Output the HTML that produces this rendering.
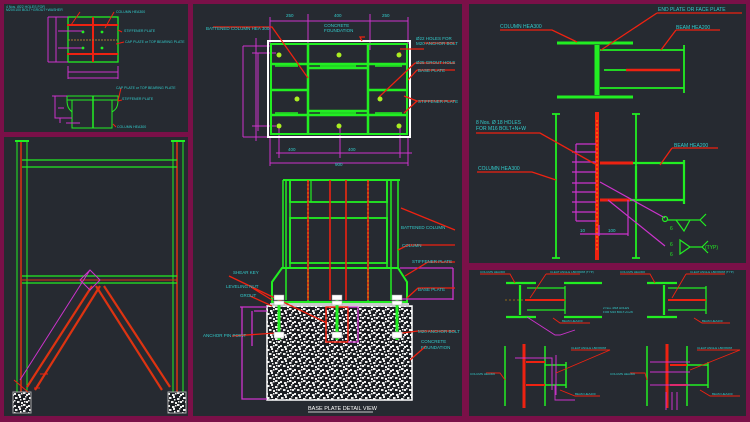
<!DOCTYPE html>
<html><head><meta charset="utf-8"><style>
html,body{margin:0;padding:0;background:#7a1048;}
svg{display:block;font-family:"Liberation Sans",sans-serif;}
</style></head><body>
<svg width="750" height="422" viewBox="0 0 750 422" xmlns="http://www.w3.org/2000/svg">
<defs>
<pattern id="conc" width="14" height="12" patternUnits="userSpaceOnUse">
<rect width="14" height="12" fill="#1c1f24"/>
<g fill="#eeeeee">
<rect x="1" y="1" width="2.5" height="2"/><rect x="5" y="0" width="2" height="2"/><rect x="9" y="2" width="2.5" height="2"/><rect x="12" y="5" width="2" height="2"/>
<rect x="3" y="5" width="2.5" height="2"/><rect x="7" y="6" width="2" height="2"/><rect x="0" y="9" width="2" height="2"/><rect x="4" y="10" width="2.5" height="2"/>
<rect x="9" y="8" width="2.5" height="2"/><rect x="12" y="10" width="2" height="2"/><rect x="6" y="3" width="1.5" height="1.5"/><rect x="11" y="0" width="1.5" height="1.5"/>
<rect x="0" y="4" width="1.5" height="1.5"/><rect x="7" y="9" width="1.5" height="1.5"/><rect x="10" y="5" width="1.5" height="1.5"/>
</g></pattern>
</defs>
<rect width="750" height="422" fill="#7a1048"/>
<g fill="#262a31">
<rect x="4" y="4" width="184" height="128"/>
<rect x="4" y="137" width="184" height="279"/>
<rect x="193" y="4" width="269" height="412"/>
<rect x="469" y="4" width="277" height="259"/>
<rect x="469" y="270" width="277" height="146"/>
</g>

<!-- ===== TOP LEFT ===== -->
<g stroke-width="1" fill="none">
<rect x="68" y="17" width="50" height="45" stroke="#22ee22" stroke-width="1.3"/>
<line x1="67" y1="25" x2="118" y2="25" stroke="#ee2211" stroke-width="2"/>
<line x1="67" y1="54" x2="118" y2="54" stroke="#ee2211" stroke-width="2"/>
<line x1="93" y1="17" x2="93" y2="62" stroke="#ee2211" stroke-width="2"/>
<line x1="68" y1="40" x2="118" y2="40" stroke="#aa7733" stroke-dasharray="2 1"/>
<path d="M48 17 H68 M48 62 H68 M48 17 V62 M56 17 V62 M68 66 V79 M118 66 V79 M68 72 H118 M68 78 H118 M58 31 H84 M58 48 H84" stroke="#cc33cc"/>
<path d="M67 96 H118 V100 H67 Z" stroke="#22ee22"/>
<path d="M72 100 V128 H112 V100 M67 100 C67 108 70 110 72 112 M118 100 C118 108 115 110 112 112" stroke="#22ee22"/>
<line x1="93" y1="96" x2="93" y2="128" stroke="#22ee22" stroke-width="1.5"/>
<path d="M52 96 H67 M55 96 V118 H72 M58 108 H64 M60 118 V123 M66 123 H80" stroke="#cc33cc"/>
<path d="M71 25 L80 12 M105 28 L114 12 M118 30 L122 32 M116 44 L124 42 M118 101 L121 88 M118 101 L122 100 M113 124 L116 127" stroke="#ee2211"/>
</g>
<g fill="#22ee22"><circle cx="83" cy="32" r="1.4"/><circle cx="102" cy="32" r="1.4"/><circle cx="83" cy="48" r="1.4"/><circle cx="102" cy="48" r="1.4"/></g>
<g fill="#33cccc" font-size="3.5">
<text x="6" y="8">4 Nos. Ø22 HOLES FOR</text><text x="6" y="11">M20X100 BOLT+GROUT+WASHER</text>
<text x="116" y="13">COLUMN HEA300</text>
<text x="124" y="32">STIFFENER PLATE</text>
<text x="125" y="43">CAP PLATE or TOP BEARING PLATE</text>
<text x="116" y="89">CAP PLATE or TOP BEARING PLATE</text>
<text x="122" y="100">STIFFENER PLATE</text>
<text x="117" y="128">COLUMN HEA300</text>
</g>

<!-- ===== LEFT MID FRAME ===== -->
<g fill="none" stroke-width="1">
<path d="M17 141 V393 M27 141 V393 M173 141 V393 M183 141 V393" stroke="#22ee22"/>
<path d="M21 141 V393 M177 141 V393" stroke="#dd3311" stroke-width="1.5"/>
<path d="M15 141 H29 M171 141 H185" stroke="#22ee22" stroke-width="2"/>
<path d="M22 160 H177 M22 167 H177 M22 276 H177 M22 283 H177" stroke="#22ee22" stroke-width="1.3"/>
<line x1="22" y1="280" x2="177" y2="280" stroke="#dd3311"/>
<path d="M92 286 L27 387 M100 286 L35 390 M104 286 L170 387 M96 286 L162 390" stroke="#dd3311" stroke-width="2.2"/>
<path d="M90 270 L100 280 L90 290 L80 280 Z M90 270 L20 380" stroke="#cc33cc"/>
<rect x="13" y="392" width="18" height="21" fill="url(#conc)" stroke="#aaa"/>
<rect x="168" y="392" width="18" height="21" fill="url(#conc)" stroke="#aaa"/>
<path d="M14 380 L28 392 M40 374 L48 374 M34 388 L40 388" stroke="#ee2211"/>
</g>

<!-- ===== CENTER PLAN ===== -->
<g fill="none">
<path d="M270 17 V44 M308 14 V50 M370 14 V50 M408 17 V44 M270 21 H408" stroke="#cc33cc"/>
<path d="M243 46 V137 M258 53 V131 M243 46 H270 M243 137 H270 M252 53 H276 M252 126 H276 M256 38 V141 M276 153 H412 M270 163 H408 M270 136 V166 M408 136 V166 M279 128 V158 M340 128 V158 M400 128 V158" stroke="#cc33cc"/>
<rect x="268" y="41" width="142" height="96" stroke="#ffffff" stroke-width="2"/>
<rect x="271" y="44" width="136" height="90" stroke="#22ee22" stroke-width="2"/>
<path d="M271 64 H407 M271 115 H407 M308 44 V134 M368 44 V134 M271 90 H308 M368 90 H407 M308 68 H368 M308 111 H368" stroke="#22ee22" stroke-width="2.5"/>
<path d="M275 66 H298 M320 66 H356 M375 66 H402 M275 113 H298 M320 113 H356 M375 113 H402" stroke="#22ee22" stroke-width="1.5"/>
<path d="M213 27 H272 L308 78 M365 37 H360 L362 41 M400 49 H424 M400 54 L400 52 M379 97 L415 63 M408 80 L417 70 M404 96 L417 101 M404 113 L417 101 M417 101 H455 M417 70 H455 M415 63 H455 M424 43 H455" stroke="#ee2211" stroke-width="1.3"/>
</g>
<g fill="#aaee22"><circle cx="279" cy="55" r="2.5"/><circle cx="339" cy="55" r="2.5"/><circle cx="399" cy="55" r="2.5"/><circle cx="297" cy="99" r="2.5"/><circle cx="380" cy="99" r="2.5"/><circle cx="279" cy="126" r="2.5"/><circle cx="339" cy="126" r="2.5"/><circle cx="399" cy="126" r="2.5"/></g>
<g fill="#33cccc" font-size="4.5">
<text x="286" y="17">250</text><text x="334" y="17">400</text><text x="382" y="17">250</text>
<text x="206" y="30">BATTENED COLUMN HEA 300</text>
<text x="324" y="27">CONCRETE</text><text x="324" y="32">FOUNDATION</text>
<text x="416" y="40">Ø22 HOLES FOR</text><text x="416" y="45">M20 ANCHOR BOLT</text>
<text x="416" y="64">Ø25 GROUT HOLE</text><text x="418" y="72">BASE PLATE</text>
<text x="418" y="103">STIFFENER PLATE</text>
<text x="288" y="151">400</text><text x="348" y="151">400</text><text x="335" y="166">900</text>
</g>

<!-- ===== CENTER ELEVATION ===== -->
<g fill="none">
<path d="M283 180 H400" stroke="#22ee22" stroke-width="2"/>
<path d="M286 180 V300 M290 180 V268 M387 180 V268 M391 180 V300 M398 180 V268 M283 180 V268" stroke="#22ee22" stroke-width="1.5"/>
<rect x="290" y="180" width="97" height="22" stroke="#22ee22" stroke-width="1.8"/>
<rect x="290" y="218" width="97" height="45" stroke="#22ee22" stroke-width="1.8"/>
<path d="M311 180 V202 M346 180 V202" stroke="#22ee22" stroke-width="1.2"/>
<path d="M272 282 L282 268 H398 L407 282 V302 H272 Z" stroke="#22ee22" stroke-width="2"/>
<path d="M308 268 V302 M368 268 V302" stroke="#22ee22" stroke-width="1.5"/>
<path d="M308 180 V300 M330 180 V300 M346 180 V300 M368 180 V300" stroke="#ee2211" stroke-width="1.6"/>
<path d="M308 180 V300 M368 180 V300" stroke="#ffaa00" stroke-width="0.6" stroke-dasharray="2 2"/>
<rect x="267" y="306" width="145" height="94" fill="url(#conc)" stroke="#ffffff" stroke-width="1.5"/>
<line x1="270" y1="304" x2="409" y2="304" stroke="#ffffff" stroke-width="1.5"/>
<path d="M240 307 H267 M242 307 V399 H267 M252 311 V346 M254 311 H267" stroke="#cc33cc" stroke-width="1.3"/>
<rect x="326" y="307" width="22" height="35" stroke="#ee2211" stroke-width="1.5"/>
<path d="M348 307 H358 V342 H348 M400 299 H453 V300 M453 268 V300 M400 268 H453" stroke="#cc33cc" stroke-width="1.3"/>
<path d="M279 295 V340 M337 295 V340 M397 295 V340" stroke="#22ee22" stroke-width="3"/>
<path d="M229 276 L327 323 M251 287 L272 300 M250 296 L272 306 M232 336 L276 333 M401 208 L455 230 M398 250 L408 245 H455 M405 276 L428 262 H455 M407 298 L418 288 H455 M402 333 L418 331 H455 M410 360 L426 346" stroke="#ee2211" stroke-width="1.3"/>
</g>
<g fill="#ffffff" stroke="#999" stroke-width="0.5">
<rect x="274" y="295" width="10" height="5"/><rect x="274" y="301" width="10" height="4"/><rect x="274" y="332" width="10" height="6"/>
<rect x="332" y="295" width="10" height="5"/><rect x="332" y="301" width="10" height="4"/><rect x="332" y="332" width="10" height="6"/>
<rect x="392" y="295" width="10" height="5"/><rect x="392" y="301" width="10" height="4"/><rect x="392" y="332" width="10" height="6"/>
</g>
<g fill="#33cccc" font-size="4.5">
<text x="401" y="229">BATTENED COLUMN</text><text x="402" y="247">COLUMN</text>
<text x="412" y="263">STIFFENER PLATE</text><text x="418" y="291">BASE PLATE</text>
<text x="418" y="333">M20 ANCHOR BOLT</text><text x="421" y="343">CONCRETE</text><text x="421" y="349">FOUNDATION</text>
<text x="233" y="274">SHEAR KEY</text><text x="226" y="288">LEVELING NUT</text><text x="240" y="297">GROUT</text>
<text x="203" y="337">ANCHOR PIN POINT</text>
</g>
<text x="308" y="410" fill="#ffffff" font-size="5.5">BASE PLATE DETAIL VIEW</text>
<line x1="308" y1="412" x2="373" y2="412" stroke="#fff" stroke-width="0.7"/>

<!-- ===== RIGHT TOP ===== -->
<g fill="none">
<path d="M557 43 H633 M557 97 H633" stroke="#22ee22" stroke-width="3"/>
<path d="M597 45 V95" stroke="#22ee22" stroke-width="5"/>
<path d="M600 50 H684 M600 88 H684 M684 45 V93 M604 70 H626" stroke="#22ee22" stroke-width="1.8"/>
<path d="M626 70 H680" stroke="#ee2211" stroke-width="2.5"/>
<path d="M556 114 V258 M636 114 V258 M552 114 H560 M632 114 H640 M552 258 H560 M632 258 H640" stroke="#22ee22" stroke-width="1.8"/>
<path d="M597 112 V260" stroke="#ee2211" stroke-width="4"/>
<path d="M597 120 V250" stroke="#ffaa00" stroke-width="0.8" stroke-dasharray="2 2"/>
<path d="M600 163 H684 M600 200 H684 M684 160 V204 M636 166 V198" stroke="#22ee22" stroke-width="2.2"/>
<path d="M600 163 H633 M600 200 H630" stroke="#ee2211" stroke-width="3"/>
<path d="M576 144 H596 M576 144 V221 M576 221 H596 M572 152 H596 M572 162 H596 M572 172 H596 M572 183 H596 M572 192 H596 M572 202 H596 M572 212 H596 M580 234 H628 M599 225 V236 M628 200 V236 M600 182 L665 218 M608 200 L665 246" stroke="#cc33cc" stroke-width="1.2"/>
<path d="M667 220 H700 M676 220 L684 231 L690 220 M700 220 L706 214 M700 220 L706 226 M680 240 L690 247 L680 254 Z M690 247 H702 M702 247 L708 241 M702 247 L708 253" stroke="#22ee22" stroke-width="1.2"/>
<circle cx="665" cy="219" r="2.5" stroke="#22ee22" stroke-width="1.2"/>
<path d="M500 30 H552 L577 42 M657 13 H742 M657 13 L601 50 M676 30 H720 M676 30 L661 50 M476 133 H540 L595 164 M477 172 H532 L556 180 M672 148 H718 M672 148 L660 165" stroke="#ee2211" stroke-width="1.3"/>
</g>
<g fill="#33cccc" font-size="5">
<text x="500" y="28">COLUMN HEA300</text><text x="658" y="11">END PLATE OR FACE PLATE</text>
<text x="676" y="29">BEAM HEA200</text><text x="476" y="124">8 Nos. Ø 18 HOLES</text><text x="476" y="130">FOR M16 BOLT+N+W</text>
<text x="478" y="170">COLUMN HEA300</text><text x="674" y="147">BEAM HEA200</text>
</g>
<g fill="#33cccc" font-size="4.5"><text x="580" y="232">10</text><text x="608" y="232">100</text></g>
<g fill="#22ee22" font-size="5"><text x="705" y="249">(TYP)</text><text x="670" y="230">6</text><text x="670" y="246">6</text><text x="670" y="256">6</text></g>

<!-- ===== RIGHT BOTTOM ===== -->
<g fill="none">
<path d="M506 283 H536 M506 317 H536 M520 285 V315 M564 283 H602 M564 317 H602" stroke="#22ee22" stroke-width="2.2"/>
<path d="M527 288 H565 M527 310 H565 M565 286 V314" stroke="#22ee22" stroke-width="1.3"/>
<path d="M525 300 H565" stroke="#ee2211" stroke-width="2"/>
<path d="M505 300 H525" stroke="#ffaa00" stroke-width="0.6" stroke-dasharray="2 2"/>
<path d="M647 283 H677 M647 317 H677 M664 285 V315" stroke="#22ee22" stroke-width="2.2"/>
<path d="M668 288 H706 M668 310 H706 M706 286 V314" stroke="#22ee22" stroke-width="1.3"/>
<path d="M668 300 H706" stroke="#ee2211" stroke-width="2"/>
<path d="M505 346 V406 M545 346 V406 M647 346 V406 M687 346 V406 M545 365 H566 M545 385 H566 M566 362 V388 M687 365 H708 M687 385 H708 M708 362 V388" stroke="#22ee22" stroke-width="1.5"/>
<path d="M524 344 V408 M667 344 V408" stroke="#ee2211" stroke-width="3"/>
<path d="M526 362 H545 M526 385 H545 M670 365 H687 M670 385 H687" stroke="#ee2211" stroke-width="2"/>
<path d="M515 358 H552 V390 M556 355 V395 M650 362 H690 M650 372 H690 M650 385 H690 M666 392 V410 M672 392 V410 M677 392 V410" stroke="#cc33cc" stroke-width="1"/>
<path d="M527 317 L555 335 L560 335 L575 330 M555 385 L555 400 L575 400" stroke="#cc33cc" stroke-width="0.9"/>
<path d="M480 274 H510 L515 283 M546 274 H580 M546 274 L530 298 M553 318 L560 323 H590 M620 274 H650 L655 283 M686 274 H725 M686 274 L672 298 M694 318 L702 323 H730 M486 373 H500 L505 380 M571 350 H610 L556 373 M630 373 H645 L647 380 M697 350 H740 L690 370 M560 390 L575 396 H600 M700 390 L710 396 H740" stroke="#ee2211" stroke-width="0.9"/>
</g>
<g fill="#33cccc" font-size="3">
<text x="480" y="273">COLUMN HEA300</text><text x="550" y="273">CLEAT ANGLE L80X80X8 (TYP)</text><text x="562" y="322">BEAM HEA200</text>
<text x="620" y="273">COLUMN HEA300</text><text x="690" y="273">CLEAT ANGLE L80X80X8 (TYP)</text><text x="702" y="322">BEAM HEA200</text>
<text x="603" y="309">2 Nos. Ø18 HOLES</text><text x="603" y="313">FOR M16 BOLT+N+W</text>
<text x="571" y="349">CLEAT ANGLE L80X80X8</text><text x="697" y="349">CLEAT ANGLE L80X80X8</text>
<text x="470" y="375">COLUMN HEA300</text><text x="610" y="375">COLUMN HEA300</text>
<text x="575" y="395">BEAM HEA200</text><text x="712" y="395">BEAM HEA200</text>
</g>
</svg>
</body></html>
